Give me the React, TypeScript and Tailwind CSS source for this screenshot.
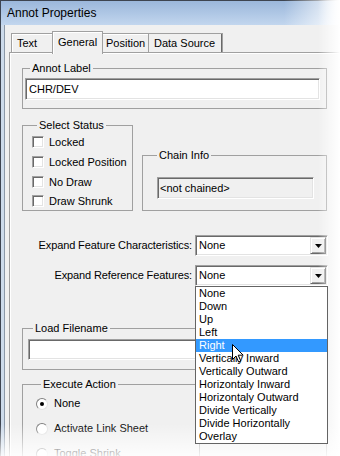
import React from "react"

const sunken =
  "border border-t-[#a0a0a0] border-l-[#a0a0a0] border-r-white border-b-white shadow-[inset_1px_1px_0_#696969,inset_-1px_-1px_0_#e3e3e3]"

function Group({
  label,
  className,
  legendClass = "ml-[5px]",
  children,
}: {
  label: string
  className: string
  legendClass?: string
  children: React.ReactNode
}) {
  return (
    <fieldset className={`shrink-0 border border-[#a0a0a0] ${className}`}>
      <legend className={`px-[2px] leading-[13px] ${legendClass}`}>{label}</legend>
      {children}
    </fieldset>
  )
}

function Check({ label, rowClass = "h-[20px]" }: { label: string; rowClass?: string }) {
  return (
    <div className={`flex items-center gap-[5px] ${rowClass}`}>
      <span className={`h-[12px] w-[12px] bg-white ${sunken}`} />
      <span>{label}</span>
    </div>
  )
}

function Radio({ label, checked }: { label: string; checked?: boolean }) {
  return (
    <div className="flex h-[25px] items-center gap-[6px]">
      <span className="flex h-[12px] w-[12px] items-center justify-center rounded-full border border-t-[#808080] border-l-[#808080] border-r-[#e3e3e3] border-b-[#e3e3e3] bg-white">
        {checked && <span className="h-[4px] w-[4px] rounded-full bg-black" />}
      </span>
      <span>{label}</span>
    </div>
  )
}

function Combo({ children }: { children?: React.ReactNode }) {
  return (
    <div className={`relative flex h-[21px] w-[133px] shrink-0 items-center bg-white p-[1px] ${sunken}`}>
      <span className="flex-1 pl-[2px]">None</span>
      <span className="flex h-full w-[16px] items-center justify-center border border-t-[#e3e3e3] border-l-[#e3e3e3] border-r-[#696969] border-b-[#696969] bg-[#f0f0f0] shadow-[inset_1px_1px_0_#fff,inset_-1px_-1px_0_#a0a0a0]">
        <svg width="7" height="4" viewBox="0 0 7 4">
          <path d="M0 0h7L3.5 4z" fill="#000" />
        </svg>
      </span>
      {children}
    </div>
  )
}

const options = [
  "None",
  "Down",
  "Up",
  "Left",
  "Right",
  "Vertically Inward",
  "Vertically Outward",
  "Horizontaly Inward",
  "Horizontaly Outward",
  "Divide Vertically",
  "Divide Horizontally",
  "Overlay",
]

export default function App() {
  return (
    <div className="relative h-[456px] w-[340px] overflow-hidden bg-white font-['Liberation_Sans',Arial,sans-serif] text-[11px] text-black">
      <div className="w-[380px] border-l border-t border-[#3d4450]">
        {/* Title bar */}
        <div className="flex h-[24px] items-center bg-linear-to-b from-[#9bb7db] to-[#c2d6ee] pl-[6px] text-[12px]">
          Annot Properties
        </div>

        <div className="bg-[#cddbeb] pl-[3px]">
          <div className="border-l border-[#8c99a8] bg-[#f0f0f0] pb-[20px] pt-[6px]">
            {/* Tabs */}
            <div className="ml-[6px] flex h-[21px] items-end">
              <div className="h-[19px] w-[43px] border border-b-0 border-[#a0a0a0] pl-[5px] leading-[18px] shadow-[inset_1px_1px_0_#fff]">
                Text
              </div>
              <div className="relative z-10 -mb-[2px] -ml-[2px] h-[23px] w-[51px] border border-b-0 border-[#a0a0a0] bg-[#f0f0f0] pl-[5px] leading-[20px] shadow-[inset_1px_1px_0_#fff]">
                General
              </div>
              <div className="-ml-[2px] h-[19px] w-[48px] border border-b-0 border-[#a0a0a0] pl-[4px] leading-[18px] shadow-[inset_1px_1px_0_#fff]">
                Position
              </div>
              <div className="h-[19px] w-[74px] border border-b-0 border-l-0 border-[#a0a0a0] pl-[5px] leading-[18px] shadow-[inset_-1px_0_0_#696969]">
                Data Source
              </div>
            </div>

            {/* Panel */}
            <div className="ml-[4px] flex flex-col border-l border-t border-[#a0a0a0] pb-[20px] pl-[12px] pt-[9px] shadow-[inset_1px_1px_0_#fff]">
              <Group label="Annot Label" className="w-[305px] pb-[8px] pl-[2px]">
                <div className={`mt-[3px] flex h-[22px] w-[295px] items-center bg-white pl-[3px] ${sunken}`}>
                  CHR/DEV
                </div>
              </Group>

              <div className="mt-[10px] flex shrink-0 items-end gap-[9px]">
                <Group label="Select Status" className="w-[111px] pl-[9px]">
                  <Check label="Locked" />
                  <Check label="Locked Position" />
                  <Check label="No Draw" />
                  <Check label="Draw Shrunk" rowClass="h-[18px]" />
                </Group>
                <Group label="Chain Info" className="w-[185px] pb-[11px] pl-[14px]" legendClass="ml-0">
                  <div className={`mt-[15px] flex h-[22px] w-[157px] items-center bg-[#f0f0f0] pl-[2px] ${sunken}`}>
                    &lt;not chained&gt;
                  </div>
                </Group>
              </div>

              <div className="mt-[24px] flex shrink-0 items-center gap-[3px]">
                <span className="w-[170px] text-right tracking-[-0.12px]">Expand Feature Characteristics:</span>
                <Combo />
              </div>
              <div className="mt-[9px] flex shrink-0 items-center gap-[3px]">
                <span className="w-[170px] text-right tracking-[-0.12px]">Expand Reference Features:</span>
                <Combo>
                  <div className="absolute left-[-1px] top-[20px] z-30 w-[133px] border border-[#646464] bg-white">
                    {options.map((o) => (
                      <div
                        key={o}
                        className={`h-[13px] pl-[3px] leading-[13px] ${o === "Right" ? "bg-[#3399ff] text-white" : ""}`}
                      >
                        {o}
                      </div>
                    ))}
                  </div>
                </Combo>
              </div>

              <Group label="Load Filename" className="mt-[36px] w-[305px] pb-[9px] pl-[5px]">
                <div className={`mt-[4px] h-[21px] w-[292px] bg-white ${sunken}`} />
              </Group>

              <Group label="Execute Action" className="mt-[8px] w-[305px] pl-[13px]">
                <div className="flex">
                  <div className="w-[163px]">
                    <Radio label="None" checked />
                    <Radio label="Activate Link Sheet" />
                    <Radio label="Toggle Shrink" />
                  </div>
                  <div className="mt-[6px] w-[110px] border-l border-[#a0a0a0]" />
                </div>
              </Group>
            </div>
          </div>
        </div>
      </div>

      {/* fades at the window edges */}
      <div className="pointer-events-none absolute left-[284px] top-0 z-20 h-[25px] w-[56px] bg-linear-to-r from-white/0 to-white/90" />
      <div className="pointer-events-none absolute right-0 top-0 z-20 h-full w-[22px] bg-linear-to-r from-white/0 to-white" />
      <div className="pointer-events-none absolute bottom-0 left-0 z-20 h-[32px] w-full bg-linear-to-b from-white/0 to-white/85" />

      {/* mouse cursor */}
      <svg className="absolute left-[232px] top-[344px] z-40" width="13" height="20" viewBox="0 0 13 20">
        <path d="M0.5 0.5v15l3.5-3.5 2.6 6 2.2-1-2.6-5.8h5z" fill="#fff" stroke="#000" strokeWidth="1" strokeLinejoin="miter" />
      </svg>
    </div>
  )
}
